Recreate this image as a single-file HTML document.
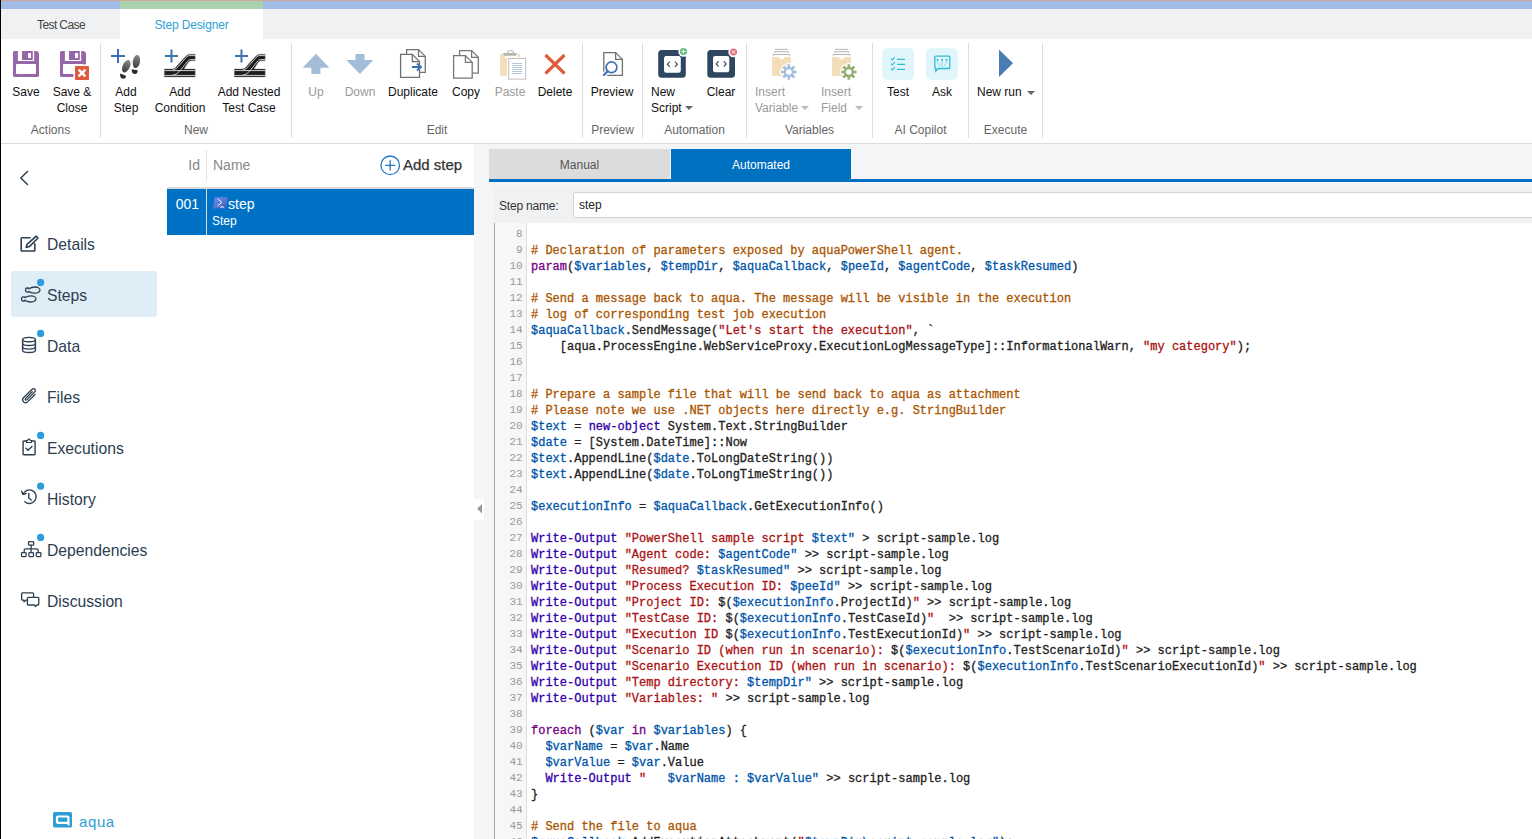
<!DOCTYPE html>
<html><head><meta charset="utf-8">
<style>
*{margin:0;padding:0;box-sizing:border-box}
html,body{width:1532px;height:839px;overflow:hidden;background:#fff}
body{font-family:"Liberation Sans",sans-serif;position:relative;color:#222}
.a{position:absolute}
/* top strips */
#pink{left:0;top:0;width:1532px;height:1px;background:#cfa79a}
#blue{left:0;top:1px;width:1532px;height:8px;background:#a0bce6}
#green{left:120px;top:1px;width:143px;height:8px;background:#a7d2ad}
#tabbar{left:0;top:9px;width:1532px;height:30px;background:#f0f1f3}
#tabsd{left:120px;top:9px;width:143px;height:30px;background:#fff}
.tab{top:10px;height:30px;line-height:30px;font-size:12px;text-align:center}
#leftline{left:0;top:0;width:1px;height:839px;background:#000;z-index:10}
/* toolbar */
#tbline{left:0;top:143px;width:1532px;height:1px;background:#dcdcdc}
.sep{top:43px;width:1px;height:95px;background:#dedede}
.lbl{font-size:12px;line-height:16px;color:#111;white-space:nowrap}
.dis{color:#9a9a9a}
.grp{font-size:12px;line-height:16px;color:#666;white-space:nowrap}
.caret{display:inline-block;width:0;height:0;border-left:4px solid transparent;border-right:4px solid transparent;border-top:4.5px solid #666;vertical-align:middle;margin-left:3px;position:relative;top:-1px}
/* sidebar */
.nav{font-size:15.7px;color:#2c3e50;left:47px;white-space:nowrap}
.dot{width:7px;height:7px;border-radius:50%;background:#2d9cdb}
/* step list */
/* right panel */
#panel{left:474px;top:144px;width:1058px;height:695px;background:#f4f5f7}
#cm{left:494px;top:223px;width:1038px;height:616px;background:#fff;border-left:1px solid #a6a6a6}
#gut{left:495px;top:223px;width:32px;height:616px;background:#f7f7f7;border-right:1px solid #ddd}
.code{font-family:"Liberation Mono",monospace;font-size:12px;line-height:16px;white-space:pre}
#gnum{left:495px;top:226px;width:27.6px;text-align:right;color:#999;font-size:11px}
#lines{left:531px;top:227px;color:#222;-webkit-text-stroke:0.3px currentColor}
.c{color:#a50}.v{color:#05a}.s{color:#a11}.k{color:#708}.b{color:#30a}
</style></head><body>
<div class="a" id="leftline"></div>
<div class="a" id="pink"></div>
<div class="a" id="blue"></div>
<div class="a" id="green"></div>
<div class="a" id="tabbar"></div>
<div class="a" id="tabsd"></div>
<div class="a tab" style="left:2px;width:118px;color:#444;letter-spacing:-0.6px">Test Case</div>
<div class="a tab" style="left:120px;width:143px;color:#2f9fd6;letter-spacing:-0.15px">Step Designer</div>

<!-- TOOLBAR -->
<div class="a" id="tbline"></div>
<div class="a sep" style="left:100px"></div>
<div class="a sep" style="left:291px"></div>
<div class="a sep" style="left:582px"></div>
<div class="a sep" style="left:642px"></div>
<div class="a sep" style="left:746px"></div>
<div class="a sep" style="left:872px"></div>
<div class="a sep" style="left:968px"></div>
<div class="a sep" style="left:1042px"></div>
<svg class="a" style="left:0;top:0" width="1100" height="143" viewBox="0 0 1100 143">
<defs>
<linearGradient id="shoe" x1="0" y1="0" x2="0" y2="1"><stop offset="0" stop-color="#8a8a8a"/><stop offset="1" stop-color="#3a3a3a"/></linearGradient>
</defs>
<!-- Save -->
<g id="floppy" fill="#9666a9">
<path fill-rule="evenodd" d="M14.5 51H37L39 53V75.5A1.5 1.5 0 0 1 37.5 77H14.5A1.5 1.5 0 0 1 13 75.5V52.5A1.5 1.5 0 0 1 14.5 51ZM17.9 51V61.1H34.2V51ZM16 65A1 1 0 0 1 17 64H35A1 1 0 0 1 36 65V73A1 1 0 0 1 35 74H17A1 1 0 0 1 16 73Z"/>
<path fill-rule="evenodd" d="M22 51H32.8V59.9H22ZM28 53V58H31V53Z"/>
</g>
<!-- Save & Close -->
<use href="#floppy" x="47"/>
<rect x="73.4" y="64.4" width="17" height="17" fill="#fff"/>
<rect x="75" y="66" width="14" height="14" rx="0.8" fill="#df5b3b"/>
<path d="M78.6 69.6l6.8 6.8M85.4 69.6l-6.8 6.8" stroke="#fff" stroke-width="2.4"/>
<!-- Add Step -->
<path d="M111 56h14M118 49v14" stroke="#3a70b2" stroke-width="2"/>
<ellipse cx="126.3" cy="66.3" rx="3.6" ry="6.6" transform="rotate(25 126.3 66.3)" fill="url(#shoe)"/>
<path d="M120.2 73.6l5.6 2.2c0.5 2-1 3.2-2.8 3-2.2-0.2-3.4-2.4-2.8-5.2z" fill="#2c2c2c"/>
<ellipse cx="136.4" cy="61.5" rx="3.6" ry="6.6" transform="rotate(10 136.4 61.5)" fill="url(#shoe)"/>
<path d="M131.8 69.2l5.8 1c0.4 2.4-1 4-3 3.8-2.2-0.2-3.2-2.4-2.8-4.8z" fill="#2c2c2c"/>
<!-- Add Condition -->
<g id="track">
<path d="M165 56h13M171.5 49.5v13" stroke="#3a70b2" stroke-width="2"/>
<path d="M164.3 68.9H172C175 68.9 176 67 179 63.5L185 57C187 55 188 54.2 190 54.2H195.2V60.8H191C189.5 60.8 189 61.5 187.5 63.5L184 68.9H195.2V77H164.3Z" fill="#1c1c1c" stroke="#9a9a9a" stroke-width="0.7" stroke-opacity="0.6"/>
<path d="M164.3 70.6H195.2M164.3 75.4H195.2M173 69.6C176 69.3 177 68 180 64.5L186 57.5C187.5 56 188.5 55.6 190 55.6H195.2M172.5 75.2C176 75 178 73 181 69.5L187 62C188 60.5 189 59.6 190.5 59.6H195.2" stroke="#e0e0e0" stroke-width="0.9" fill="none"/>
</g>
<use href="#track" x="70"/>
<!-- Up / Down -->
<path d="M316 53.7L302.6 67.7h8.8v6.2h9v-6.2h9z" fill="#a3bcd8"/>
<path d="M355.5 54.1h9v6h8.8L360 74L346.2 60.1h9.3z" fill="#a3bcd8"/>
<!-- Duplicate -->
<g stroke="#707070" stroke-width="1.3" fill="#fff">
<path d="M406.6 54.2V49.6h11.9l6.8 6.8v16h-5.5"/>
<path d="M418.5 49.6v6.8h6.8" fill="none"/>
<path d="M400.6 54.4h11.7l7.2 7.2v15.8H400.6z"/>
<path d="M412.3 54.4v7.2h7.2" fill="none"/>
</g>
<path d="M412 67h9.8M417 63.6l3.8 3.4l-3.8 3.4" stroke="#3d73b5" stroke-width="2" fill="none"/>
<!-- Copy -->
<g stroke="#777" stroke-width="1.3" fill="#fff">
<path d="M459.6 55.4V50.6h12l6.7 6.7v15.8h-6"/>
<path d="M471.6 50.6v6.7h6.7" fill="none"/>
<path d="M453.6 55.6h11.8l6.8 6.8v15.7H453.6z"/>
<path d="M465.4 55.6v6.8h6.8" fill="none"/>
</g>
<!-- Paste -->
<path d="M500 54h3.5l1.5 3.8h2v17.9H500z" fill="#f4dfba"/>
<path d="M517.3 54h2.7v3h-2.7z" fill="#f4dfba"/>
<path d="M503 53h14l-1 2.8h-12z" fill="#b4b4b4"/>
<path d="M507.5 53.2v-1.4a1 1 0 0 1 1-1h4a1 1 0 0 1 1 1v1.4" stroke="#b4b4b4" stroke-width="1" fill="none"/>
<rect x="508.7" y="58.5" width="17" height="20.6" fill="#fff" stroke="#bdbdbd" stroke-width="1"/>
<path d="M512 63.5h10M512 65.5h10M512 67.5h10M512 69.5h10M512 71.5h10M512 73.5h10" stroke="#a9c1dc" stroke-width="0.9"/>
<!-- Delete -->
<path d="M545.5 55l19 18.5M564.5 55l-19 18.5" stroke="#df5b3e" stroke-width="3.2" stroke-linecap="butt"/>
<!-- Preview -->
<g stroke="#707070" stroke-width="1.3" fill="none">
<path d="M603.8 71.4V52.6h11.8l6.8 6.8v16h-15.2"/>
<path d="M615.6 52.6v6.8h6.8"/>
</g>
<circle cx="611.5" cy="67.3" r="5.4" stroke="#3a72b8" stroke-width="1.7" fill="#fff"/>
<path d="M607.6 71.2l-3.6 3.8" stroke="#3a72b8" stroke-width="2.2" stroke-linecap="round"/>
<!-- New Script -->
<rect x="658.2" y="50" width="27.6" height="27.8" rx="3.5" fill="#2f4660"/>
<circle cx="683.5" cy="51.5" r="5.2" fill="#fff"/>
<circle cx="683.5" cy="51.5" r="3.6" fill="#5fba7d"/>
<path d="M683.5 49.4v4.2M681.4 51.5h4.2" stroke="#fff" stroke-width="1.1"/>
<rect x="664" y="56" width="16.8" height="16.8" rx="2.2" fill="#fff"/>
<path d="M669.8 61.6l-2.4 2.6l2.4 2.6M675 61.6l2.4 2.6l-2.4 2.6" stroke="#2f4660" stroke-width="1.1" fill="none"/>
<!-- Clear -->
<rect x="707.3" y="50" width="27.7" height="27.8" rx="3.5" fill="#2f4660"/>
<circle cx="733.5" cy="52" r="5.2" fill="#fff"/>
<circle cx="733.5" cy="52" r="3.6" fill="#e8707c"/>
<path d="M732 50.5l3 3M735 50.5l-3 3" stroke="#fff" stroke-width="1"/>
<rect x="713" y="56" width="16.3" height="16.3" rx="2.2" fill="#fff"/>
<path d="M718.6 61.2l-2.4 2.7l2.4 2.7M723.8 61.2l2.4 2.7l-2.4 2.7" stroke="#2f4660" stroke-width="1.1" fill="none"/>
<!-- Insert Variable -->
<g id="ivar">
<path d="M775 49.4h12.8M774.3 52.7v-1h14.4v1M773.3 55.8v-1.3h16.4v1.3" stroke="#aaa" stroke-width="0.9" fill="none"/>
<path d="M772 57.1h7.2a2.5 2.5 0 0 0 5 0h6.7v18.8H772z" fill="#f3deb9"/>
</g>
<use href="#ivar" x="60"/>
<g transform="translate(788.8 72)">
<path d="M4.20 -1.30L7.80 -1.30L7.80 1.30L4.20 1.30ZM3.89 2.05L6.43 4.60L4.60 6.43L2.05 3.89ZM1.30 4.20L1.30 7.80L-1.30 7.80L-1.30 4.20ZM-2.05 3.89L-4.60 6.43L-6.43 4.60L-3.89 2.05ZM-4.20 1.30L-7.80 1.30L-7.80 -1.30L-4.20 -1.30ZM-3.89 -2.05L-6.43 -4.60L-4.60 -6.43L-2.05 -3.89ZM-1.30 -4.20L-1.30 -7.80L1.30 -7.80L1.30 -4.20ZM2.05 -3.89L4.60 -6.43L6.43 -4.60L3.89 -2.05Z" fill="#fff" stroke="#fff" stroke-width="2.4" stroke-linejoin="round"/><circle r="6.2" fill="#fff"/>
<path d="M4.20 -1.30L7.80 -1.30L7.80 1.30L4.20 1.30ZM3.89 2.05L6.43 4.60L4.60 6.43L2.05 3.89ZM1.30 4.20L1.30 7.80L-1.30 7.80L-1.30 4.20ZM-2.05 3.89L-4.60 6.43L-6.43 4.60L-3.89 2.05ZM-4.20 1.30L-7.80 1.30L-7.80 -1.30L-4.20 -1.30ZM-3.89 -2.05L-6.43 -4.60L-4.60 -6.43L-2.05 -3.89ZM-1.30 -4.20L-1.30 -7.80L1.30 -7.80L1.30 -4.20ZM2.05 -3.89L4.60 -6.43L6.43 -4.60L3.89 -2.05Z" fill="#a6c0de"/>
<circle r="5.2" fill="#a6c0de"/><circle r="2.8" fill="#fff"/>
</g>
<g transform="translate(848.8 72)">
<path d="M4.20 -1.30L7.80 -1.30L7.80 1.30L4.20 1.30ZM3.89 2.05L6.43 4.60L4.60 6.43L2.05 3.89ZM1.30 4.20L1.30 7.80L-1.30 7.80L-1.30 4.20ZM-2.05 3.89L-4.60 6.43L-6.43 4.60L-3.89 2.05ZM-4.20 1.30L-7.80 1.30L-7.80 -1.30L-4.20 -1.30ZM-3.89 -2.05L-6.43 -4.60L-4.60 -6.43L-2.05 -3.89ZM-1.30 -4.20L-1.30 -7.80L1.30 -7.80L1.30 -4.20ZM2.05 -3.89L4.60 -6.43L6.43 -4.60L3.89 -2.05Z" fill="#fff" stroke="#fff" stroke-width="2.4" stroke-linejoin="round"/><circle r="6.2" fill="#fff"/>
<path d="M4.20 -1.30L7.80 -1.30L7.80 1.30L4.20 1.30ZM3.89 2.05L6.43 4.60L4.60 6.43L2.05 3.89ZM1.30 4.20L1.30 7.80L-1.30 7.80L-1.30 4.20ZM-2.05 3.89L-4.60 6.43L-6.43 4.60L-3.89 2.05ZM-4.20 1.30L-7.80 1.30L-7.80 -1.30L-4.20 -1.30ZM-3.89 -2.05L-6.43 -4.60L-4.60 -6.43L-2.05 -3.89ZM-1.30 -4.20L-1.30 -7.80L1.30 -7.80L1.30 -4.20ZM2.05 -3.89L4.60 -6.43L6.43 -4.60L3.89 -2.05Z" fill="#92b175"/>
<circle r="5.2" fill="#92b175"/><circle r="2.8" fill="#fff"/>
</g>
<!-- Test / Ask -->
<rect x="882" y="48" width="32" height="32" rx="5" fill="#e1f6fa"/>
<rect x="926" y="48" width="32" height="32" rx="5" fill="#e1f6fa"/>
<g stroke="#2cbdd6" stroke-width="1.1" fill="none">
<path d="M891 58.6l1.3 1.3l2.6-2.8M891 63.6l1.3 1.3l2.6-2.8M891 68.6l1.3 1.3l2.6-2.8"/>
<path d="M897 59.4h8M897 64.4h8M897 69.4h8" stroke-width="1.2"/>
<path d="M935.8 56.1h13a1 1 0 0 1 1 1v10.4a1 1 0 0 1-1 1h-10.6l-2.4 2.6v-2.6a1 1 0 0 1-1-1V57.1a1 1 0 0 1 1-1z" stroke-width="1.3"/>
<path d="M937.5 60v2.5l2.5 3.5M942 60v7M946.5 60v2.5l-2.5 3.5" stroke-width="0.8" stroke="#6fd0e0"/>
<circle cx="937.5" cy="59.8" r="1" fill="#2cbdd6" stroke="none"/><circle cx="942" cy="59.8" r="1" fill="#2cbdd6" stroke="none"/><circle cx="946.5" cy="59.8" r="1" fill="#2cbdd6" stroke="none"/>
</g>
<!-- Play -->
<path d="M999 49.4L1013 63.2L999 77.1z" fill="#4a7db3"/>
</svg>
<!-- labels -->
<div class="a lbl" style="left:0;top:84px;width:52px;text-align:center">Save</div>
<div class="a lbl" style="left:42px;top:84px;width:60px;text-align:center">Save &amp;<br>Close</div>
<div class="a lbl" style="left:96px;top:84px;width:60px;text-align:center">Add<br>Step</div>
<div class="a lbl" style="left:140px;top:84px;width:80px;text-align:center">Add<br>Condition</div>
<div class="a lbl" style="left:209px;top:84px;width:80px;text-align:center">Add Nested<br>Test Case</div>
<div class="a lbl dis" style="left:296px;top:84px;width:40px;text-align:center">Up</div>
<div class="a lbl dis" style="left:335px;top:84px;width:50px;text-align:center">Down</div>
<div class="a lbl" style="left:383px;top:84px;width:60px;text-align:center">Duplicate</div>
<div class="a lbl" style="left:441px;top:84px;width:50px;text-align:center">Copy</div>
<div class="a lbl dis" style="left:485px;top:84px;width:50px;text-align:center">Paste</div>
<div class="a lbl" style="left:530px;top:84px;width:50px;text-align:center">Delete</div>
<div class="a lbl" style="left:582px;top:84px;width:60px;text-align:center">Preview</div>
<div class="a lbl" style="left:651px;top:84px">New<br>Script<span class="caret"></span></div>
<div class="a lbl" style="left:696px;top:84px;width:50px;text-align:center">Clear</div>
<div class="a lbl dis" style="left:755px;top:84px">Insert<br>Variable<span class="caret" style="border-top-color:#bbb"></span></div>
<div class="a lbl dis" style="left:821px;top:84px">Insert<br>Field<span class="caret" style="border-top-color:#bbb;margin-left:8px"></span></div>
<div class="a lbl" style="left:873px;top:84px;width:50px;text-align:center">Test</div>
<div class="a lbl" style="left:917px;top:84px;width:50px;text-align:center">Ask</div>
<div class="a lbl" style="left:977px;top:84px">New run<span class="caret" style="margin-left:5px;top:0"></span></div>
<!-- group labels -->
<div class="a grp" style="left:1px;top:122px;width:99px;text-align:center">Actions</div>
<div class="a grp" style="left:101px;top:122px;width:190px;text-align:center">New</div>
<div class="a grp" style="left:292px;top:122px;width:290px;text-align:center">Edit</div>
<div class="a grp" style="left:583px;top:122px;width:59px;text-align:center">Preview</div>
<div class="a grp" style="left:643px;top:122px;width:103px;text-align:center">Automation</div>
<div class="a grp" style="left:747px;top:122px;width:125px;text-align:center">Variables</div>
<div class="a grp" style="left:873px;top:122px;width:95px;text-align:center">AI Copilot</div>
<div class="a grp" style="left:969px;top:122px;width:73px;text-align:center">Execute</div>


<!-- SIDEBAR -->
<div class="a" style="left:11px;top:271px;width:146px;height:46px;background:#dfedf6;border-radius:3px"></div>
<svg class="a" style="left:0;top:140px" width="170" height="700" viewBox="0 140 170 700">
<g stroke="#2c3e50" fill="none" stroke-width="1.6" stroke-linecap="round" stroke-linejoin="round">
<!-- back chevron -->
<path d="M27.5 171.5L20.8 178l6.7 6.5" stroke-width="1.5"/>
<!-- details -->
<path d="M30 237.8h-8a0.8 0.8 0 0 0-0.8 0.8v11.6a0.8 0.8 0 0 0 0.8 0.8h12a0.8 0.8 0 0 0 0.8-0.8v-6.5"/>
<path d="M36.2 236.2l1.8 1.8l-8.6 8.6l-3.2 0.9l0.9-3.2z"/>
<!-- steps footprints -->
<path d="M25.6 289.6a1.6 1.6 0 0 1 1.6-1.6h1.2l0.6 0.8c1.5-1.2 3.5-1.8 6-1.8c3 0 5 1.5 5 3s-2 3.2-5 3.2c-2.5 0-4.5-0.6-6-1.8l-0.6 0.8h-1.2a1.6 1.6 0 0 1-1.6-1.6z" stroke-width="1.3"/>
<path d="M21.6 298.4a1.6 1.6 0 0 1 1.6-1.6h1.2l0.6 0.8c1.5-1.2 3.5-1.8 6-1.8c3 0 5 1.5 5 3s-2 3.2-5 3.2c-2.5 0-4.5-0.6-6-1.8l-0.6 0.8h-1.2a1.6 1.6 0 0 1-1.6-1.6z" stroke-width="1.3"/>
<!-- data -->
<g stroke-width="1.4">
<ellipse cx="29" cy="339.6" rx="6.4" ry="2.2"/>
<path d="M22.6 339.6v10.6c0 1.3 2.9 2.3 6.4 2.3s6.4-1 6.4-2.3V339.6"/>
<path d="M22.6 343.2c0 1.3 2.9 2.3 6.4 2.3s6.4-1 6.4-2.3M22.6 346.8c0 1.3 2.9 2.3 6.4 2.3s6.4-1 6.4-2.3"/>
</g>
<!-- files paperclip -->
<path d="M35 394.5l-7.4 7.4a2.9 2.9 0 0 1-4.1-4.1l8.6-8.6a1.9 1.9 0 0 1 2.7 2.7l-8 8a0.9 0.9 0 0 1-1.3-1.3l6.8-6.8" stroke-width="1.3"/>
<!-- executions clipboard -->
<path d="M26.5 441h-2.6a0.8 0.8 0 0 0-0.8 0.8v12.2a0.8 0.8 0 0 0 0.8 0.8h10.4a0.8 0.8 0 0 0 0.8-0.8V441.8a0.8 0.8 0 0 0-0.8-0.8h-2.6" stroke-width="1.4"/>
<path d="M26.5 442.5h5v-2h-1.2a1.2 1.2 0 0 0-2.6 0h-1.2z" stroke-width="1.2"/>
<path d="M26 448.3l2 2l4-3.8" stroke-width="1.4"/>
<!-- history -->
<path d="M23 494.2a6.8 6.8 0 1 1 1.8 7.6" stroke-width="1.4"/>
<path d="M21.6 491.2l1.4 3.2l3.2-0.9" stroke-width="1.4"/>
<path d="M28.8 493.5v4.5l2.4 2" stroke-width="1.4"/>
<!-- dependencies -->
<g stroke-width="1.3">
<rect x="28.5" y="541.6" width="5.2" height="3.6" rx="0.8"/>
<path d="M31.1 545.2v3.5M24.2 551.6v-1.5a1.3 1.3 0 0 1 1.3-1.3h11.3a1.3 1.3 0 0 1 1.3 1.3v1.5M31.1 548.7v3"/>
<rect x="21.5" y="552.6" width="4.6" height="4" rx="0.8"/>
<rect x="28.9" y="552.6" width="4.6" height="4" rx="0.8"/>
<rect x="36.3" y="552.6" width="4.6" height="4" rx="0.8"/>
</g>
<!-- discussion -->
<g stroke-width="1.3">
<path d="M22.6 592.8h10a1 1 0 0 1 1 1v2.8M27.6 600.2h-1.6l-2 1.6v-1.6h-1.4a1 1 0 0 1-1-1v-5.4a1 1 0 0 1 1-1"/>
<path d="M28.4 597.4h9.4a1 1 0 0 1 1 1v5.6a1 1 0 0 1-1 1h-1l-1.6 1.5l-0.6-1.5h-6.2a1 1 0 0 1-1-1v-5.6a1 1 0 0 1 1-1z"/>
</g>
</g>
<g fill="#2d9cdb">
<circle cx="40.6" cy="282.4" r="3.6"/>
<circle cx="40.6" cy="333.4" r="3.6"/>
<circle cx="40.6" cy="435.4" r="3.6"/>
<circle cx="40.6" cy="486.2" r="3.6"/>
<circle cx="40.6" cy="537.4" r="3.6"/>
</g>
<!-- aqua logo -->
<rect x="53" y="812" width="19" height="15.6" rx="1.5" fill="#2e9dd4"/>
<path d="M58.2 816.5h9a1.2 1.2 0 0 1 1.2 1.2v6.2l-1.4-1h-8.8a1.2 1.2 0 0 1-1.2-1.2v-4a1.2 1.2 0 0 1 1.2-1.2z" fill="none" stroke="#fff" stroke-width="2.2"/>
</svg>
<div class="a nav" style="top:236px">Details</div>
<div class="a nav" style="top:287px">Steps</div>
<div class="a nav" style="top:338px">Data</div>
<div class="a nav" style="top:389px">Files</div>
<div class="a nav" style="top:440px">Executions</div>
<div class="a nav" style="top:491px">History</div>
<div class="a nav" style="top:542px">Dependencies</div>
<div class="a nav" style="top:593px">Discussion</div>
<div class="a" style="left:79px;top:812px;font-size:15px;line-height:20px;color:#2e9dd4;letter-spacing:0.6px">aqua</div>


<!-- STEP LIST -->
<div class="a" style="left:167px;top:187px;width:307px;height:2px;background:#dad8d6"></div>
<div class="a" style="left:206px;top:150px;width:1px;height:31px;background:#e0e0e0"></div>
<div class="a" style="left:167px;top:155px;width:33px;text-align:right;font-size:14px;line-height:20px;color:#888">Id</div>
<div class="a" style="left:213px;top:155px;font-size:14px;line-height:20px;color:#888">Name</div>
<svg class="a" style="left:379px;top:154px" width="23" height="23" viewBox="379 154 23 23">
<circle cx="390.2" cy="165.3" r="9.3" fill="none" stroke="#1f78c6" stroke-width="1.3"/>
<path d="M390.2 160.2v10.2M385.1 165.3h10.2" stroke="#1f78c6" stroke-width="1.3"/>
</svg>
<div class="a" style="left:403px;top:155px;font-size:15px;line-height:20px;color:#333;-webkit-text-stroke:0.25px #333">Add step</div>
<div class="a" style="left:167px;top:189px;width:307px;height:46px;background:#0072c6"></div>
<div class="a" style="left:206px;top:189px;width:1px;height:46px;background:#d6dee8"></div>
<div class="a" style="left:167px;top:194px;width:32px;text-align:right;font-size:14px;line-height:20px;color:#fff">001</div>
<svg class="a" style="left:213px;top:196px" width="16" height="14" viewBox="213 196 16 14">
<defs><linearGradient id="psg" x1="0" y1="0" x2="1" y2="1"><stop offset="0" stop-color="#6f95ee"/><stop offset="1" stop-color="#4058b6"/></linearGradient></defs><path d="M214.8 197.3h13l-1.8 11.1H213z" fill="url(#psg)"/>
<path d="M218 199.2l3.8 3.2l-4.4 3.6M220.2 207h3.8" stroke="#fff" stroke-width="1" fill="none"/>
</svg>
<div class="a" style="left:228px;top:194px;font-size:14px;line-height:20px;color:#fff">step</div>
<div class="a" style="left:212px;top:213px;font-size:12px;line-height:16px;color:#fff">Step</div>


<!-- RIGHT PANEL -->
<div class="a" id="panel"></div>
<div class="a" style="left:489px;top:149px;width:181px;height:30px;background:#dcdcdc;text-align:center;font-size:12px;line-height:33px;color:#555">Manual</div>
<div class="a" style="left:671px;top:149px;width:180px;height:30px;background:#0070c0;text-align:center;font-size:12px;line-height:33px;color:#fff">Automated</div>
<div class="a" style="left:489px;top:179px;width:1043px;height:3px;background:#0070c0"></div>
<div class="a" style="left:494px;top:187px;width:1038px;height:36px;background:#f0f1f3"></div>
<div class="a" style="left:499px;top:198px;font-size:12px;line-height:16px;color:#333;letter-spacing:-0.2px">Step name:</div>
<div class="a" style="left:573px;top:192px;width:970px;height:26px;background:#fff;border:1px solid #d4d4d4;border-radius:2px"></div>
<div class="a" style="left:579px;top:197px;font-size:12px;line-height:16px;color:#222">step</div>
<div class="a" style="left:474px;top:499px;width:10px;height:21px;background:#fff"></div>
<svg class="a" style="left:474px;top:499px" width="10" height="21" viewBox="0 0 10 21"><path d="M8 5v9.5L3 9.75z" fill="#999"/></svg>

<div class="a" id="cm"></div>
<div class="a" id="gut"></div>
<div class="a code" id="gnum"><div>8</div><div>9</div><div>10</div><div>11</div><div>12</div><div>13</div><div>14</div><div>15</div><div>16</div><div>17</div><div>18</div><div>19</div><div>20</div><div>21</div><div>22</div><div>23</div><div>24</div><div>25</div><div>26</div><div>27</div><div>28</div><div>29</div><div>30</div><div>31</div><div>32</div><div>33</div><div>34</div><div>35</div><div>36</div><div>37</div><div>38</div><div>39</div><div>40</div><div>41</div><div>42</div><div>43</div><div>44</div><div>45</div><div>46</div></div>
<div class="a code" id="lines"><div>&nbsp;</div><div><span class="c"># Declaration of parameters exposed by aquaPowerShell agent.</span></div><div><span class="k">param</span>(<span class="v">$variables</span>, <span class="v">$tempDir</span>, <span class="v">$aquaCallback</span>, <span class="v">$peeId</span>, <span class="v">$agentCode</span>, <span class="v">$taskResumed</span>)</div><div>&nbsp;</div><div><span class="c"># Send a message back to aqua. The message will be visible in the execution</span></div><div><span class="c"># log of corresponding test job execution</span></div><div><span class="v">$aquaCallback</span>.SendMessage(<span class="s">"Let's start the execution"</span>, `</div><div>    [aqua.ProcessEngine.WebServiceProxy.ExecutionLogMessageType]::InformationalWarn, <span class="s">"my category"</span>);</div><div>&nbsp;</div><div>&nbsp;</div><div><span class="c"># Prepare a sample file that will be send back to aqua as attachment</span></div><div><span class="c"># Please note we use .NET objects here directly e.g. StringBuilder</span></div><div><span class="v">$text</span> = <span class="b">new-object</span> System.Text.StringBuilder</div><div><span class="v">$date</span> = [System.DateTime]::Now</div><div><span class="v">$text</span>.AppendLine(<span class="v">$date</span>.ToLongDateString())</div><div><span class="v">$text</span>.AppendLine(<span class="v">$date</span>.ToLongTimeString())</div><div>&nbsp;</div><div><span class="v">$executionInfo</span> = <span class="v">$aquaCallback</span>.GetExecutionInfo()</div><div>&nbsp;</div><div><span class="b">Write-Output</span> <span class="s">"PowerShell sample script </span><span class="v">$text"</span> &gt; script-sample.log</div><div><span class="b">Write-Output</span> <span class="s">"Agent code: </span><span class="v">$agentCode"</span> &gt;&gt; script-sample.log</div><div><span class="b">Write-Output</span> <span class="s">"Resumed? </span><span class="v">$taskResumed"</span> &gt;&gt; script-sample.log</div><div><span class="b">Write-Output</span> <span class="s">"Process Execution ID: </span><span class="v">$peeId"</span> &gt;&gt; script-sample.log</div><div><span class="b">Write-Output</span> <span class="s">"Project ID: </span>$(<span class="v">$executionInfo</span>.ProjectId)<span class="s">"</span> &gt;&gt; script-sample.log</div><div><span class="b">Write-Output</span> <span class="s">"TestCase ID: </span>$(<span class="v">$executionInfo</span>.TestCaseId)<span class="s">"</span>  &gt;&gt; script-sample.log</div><div><span class="b">Write-Output</span> <span class="s">"Execution ID </span>$(<span class="v">$executionInfo</span>.TestExecutionId)<span class="s">"</span> &gt;&gt; script-sample.log</div><div><span class="b">Write-Output</span> <span class="s">"Scenario ID (when run in scenario): </span>$(<span class="v">$executionInfo</span>.TestScenarioId)<span class="s">"</span> &gt;&gt; script-sample.log</div><div><span class="b">Write-Output</span> <span class="s">"Scenario Execution ID (when run in scenario): </span>$(<span class="v">$executionInfo</span>.TestScenarioExecutionId)<span class="s">"</span> &gt;&gt; script-sample.log</div><div><span class="b">Write-Output</span> <span class="s">"Temp directory: </span><span class="v">$tempDir"</span> &gt;&gt; script-sample.log</div><div><span class="b">Write-Output</span> <span class="s">"Variables: "</span> &gt;&gt; script-sample.log</div><div>&nbsp;</div><div><span class="k">foreach</span> (<span class="v">$var</span> <span class="k">in</span> <span class="v">$variables</span>) {</div><div>  <span class="v">$varName</span> = <span class="v">$var</span>.Name</div><div>  <span class="v">$varValue</span> = <span class="v">$var</span>.Value</div><div>  <span class="b">Write-Output</span> <span class="s">"   </span><span class="v">$varName : </span><span class="v">$varValue"</span> &gt;&gt; script-sample.log</div><div>}</div><div>&nbsp;</div><div><span class="c"># Send the file to aqua</span></div><div><span class="v">$aquaCallback</span>.AddExecutionAttachment(<span class="s">"</span><span class="v">$tempDir\script-sample.log"</span>);</div></div>
</body></html>
